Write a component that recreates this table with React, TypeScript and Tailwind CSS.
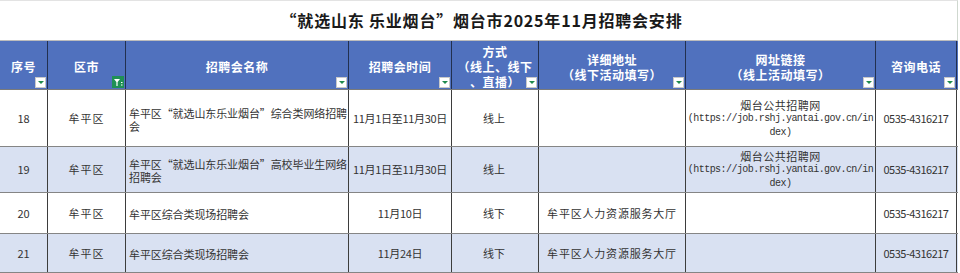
import React from "react";

const widths = [48, 78, 223, 103, 87, 147, 190, 81];
const font = { fontFamily: '"Noto Sans CJK SC", "Noto Sans", sans-serif' };

function Drop() {
  return (
    <div className="absolute right-[1px] bottom-[1px] w-[11px] h-[11px] bg-white border border-[#c9c9c9] flex items-center justify-center">
      <div className="w-0 h-0 border-l-[3px] border-r-[3px] border-t-[3px] border-l-transparent border-r-transparent border-t-[#1f8a4c]" />
    </div>
  );
}

function Filter() {
  return (
    <div className="absolute right-[1px] bottom-[1px] w-[12px] h-[12px] bg-[#1f9155] flex items-center justify-center">
      <svg width="12" height="12" viewBox="0 0 12 12">
        <polygon points="2,3 8,3 5.6,6 5.6,10 4.4,10 4.4,6" fill="#fff" />
        <rect x="9" y="6" width="1.5" height="1" fill="#fff" />
        <rect x="9" y="8.5" width="1.5" height="1" fill="#fff" />
      </svg>
    </div>
  );
}

const headers: { lines: string[]; filter?: boolean }[] = [
  { lines: ["序号"] },
  { lines: ["区市"], filter: true },
  { lines: ["招聘会名称"] },
  { lines: ["招聘会时间"] },
  { lines: ["方式", "（线上、线下", "、直播）"] },
  { lines: ["详细地址", "（线下活动填写）"] },
  { lines: ["网址链接", "（线上活动填写）"] },
  { lines: ["咨询电话"] },
];

type Row = {
  h: number;
  alt: boolean;
  no: string;
  name: string[];
  time: string;
  mode: string;
  addr: string;
  url: boolean;
};

const rows: Row[] = [
  {
    h: 57,
    alt: false,
    no: "18",
    name: ["牟平区“就选山东乐业烟台”综合类网络招聘", "会"],
    time: "11月1日至11月30日",
    mode: "线上",
    addr: "",
    url: true,
  },
  {
    h: 46,
    alt: true,
    no: "19",
    name: ["牟平区“就选山东乐业烟台”高校毕业生网络", "招聘会"],
    time: "11月1日至11月30日",
    mode: "线上",
    addr: "",
    url: true,
  },
  {
    h: 41,
    alt: false,
    no: "20",
    name: ["牟平区综合类现场招聘会"],
    time: "11月10日",
    mode: "线下",
    addr: "牟平区人力资源服务大厅",
    url: false,
  },
  {
    h: 39,
    alt: true,
    no: "21",
    name: ["牟平区综合类现场招聘会"],
    time: "11月24日",
    mode: "线下",
    addr: "牟平区人力资源服务大厅",
    url: false,
  },
];

function Cell({
  w,
  children,
  className = "",
}: {
  w: number;
  children?: React.ReactNode;
  className?: string;
}) {
  return (
    <div
      className={`shrink-0 h-full border-r border-[#3d3d3d] flex items-center ${className}`}
      style={{ width: w }}
    >
      {children}
    </div>
  );
}

export default function App() {
  return (
    <div className="w-[960px] h-[273px] bg-white overflow-hidden" style={font}>
      <div className="w-[958px]">
        <div className="h-[41px] border-t border-[#e3e3e3] border-b border-b-[#bdbdbd] border-r border-r-[#cfd8cf] flex items-center justify-center">
          <div className="text-[16px] font-bold text-[#1a1a1a] tracking-[0.8px] pl-[6px] pb-[2px]">
            “就选山东&nbsp;乐业烟台”烟台市2025年11月招聘会安排
          </div>
        </div>
        <div className="h-[49px] flex bg-[#5071be] border-b border-[#7a7a7a]">
          {headers.map((hd, i) => (
            <div
              key={i}
              className="relative shrink-0 h-full border-r border-[#22304f] flex flex-col items-center justify-center text-white font-bold text-[12px] leading-[15px] tracking-[0.5px] pt-[3px]"
              style={{ width: widths[i] }}
            >
              {hd.lines.map((l, j) => (
                <div key={j} className="whitespace-nowrap h-[15px]">
                  {l}
                </div>
              ))}
              {hd.filter ? <Filter /> : <Drop />}
            </div>
          ))}
        </div>
        {rows.map((r, i) => (
          <div
            key={i}
            className={`flex border-b border-[#858585] text-[11px] text-[#333333] ${
              r.alt ? "bg-[#d9e1f2]" : "bg-white"
            }`}
            style={{ height: r.h }}
          >
            <Cell w={widths[0]} className="justify-center">
              {r.no}
            </Cell>
            <Cell w={widths[1]} className="justify-center tracking-[1px]">
              牟平区
            </Cell>
            <Cell w={widths[2]} className="pl-[3px]">
              <div className="leading-[13px] pt-[3px]">
                {r.name.map((l, j) => (
                  <div key={j} className="whitespace-nowrap tracking-[-0.1px] h-[13px]">
                    {l}
                  </div>
                ))}
              </div>
            </Cell>
            <Cell w={widths[3]} className="justify-center tracking-[-0.3px]">
              {r.time}
            </Cell>
            <Cell w={widths[4]} className="justify-center pr-[2px]">
              {r.mode}
            </Cell>
            <Cell w={widths[5]} className="justify-center tracking-[0.8px]">
              {r.addr}
            </Cell>
            <Cell w={widths[6]} className="justify-center">
              {r.url ? (
                <div className="flex flex-col items-center leading-[14px] pt-[1px]">
                  <div className="tracking-[0.5px]">烟台公共招聘网</div>
                  <div
                    className="text-[10px] tracking-[-0.55px] whitespace-nowrap"
                    style={{ fontFamily: '"Liberation Mono", monospace' }}
                  >
                    (https://job.rshj.yantai.gov.cn/in
                  </div>
                  <div
                    className="text-[10px] tracking-[-0.55px]"
                    style={{ fontFamily: '"Liberation Mono", monospace' }}
                  >
                    dex)
                  </div>
                </div>
              ) : null}
            </Cell>
            <Cell w={widths[7]} className="justify-center tracking-[-0.5px]">
              0535-4316217
            </Cell>
          </div>
        ))}
      </div>
    </div>
  );
}
